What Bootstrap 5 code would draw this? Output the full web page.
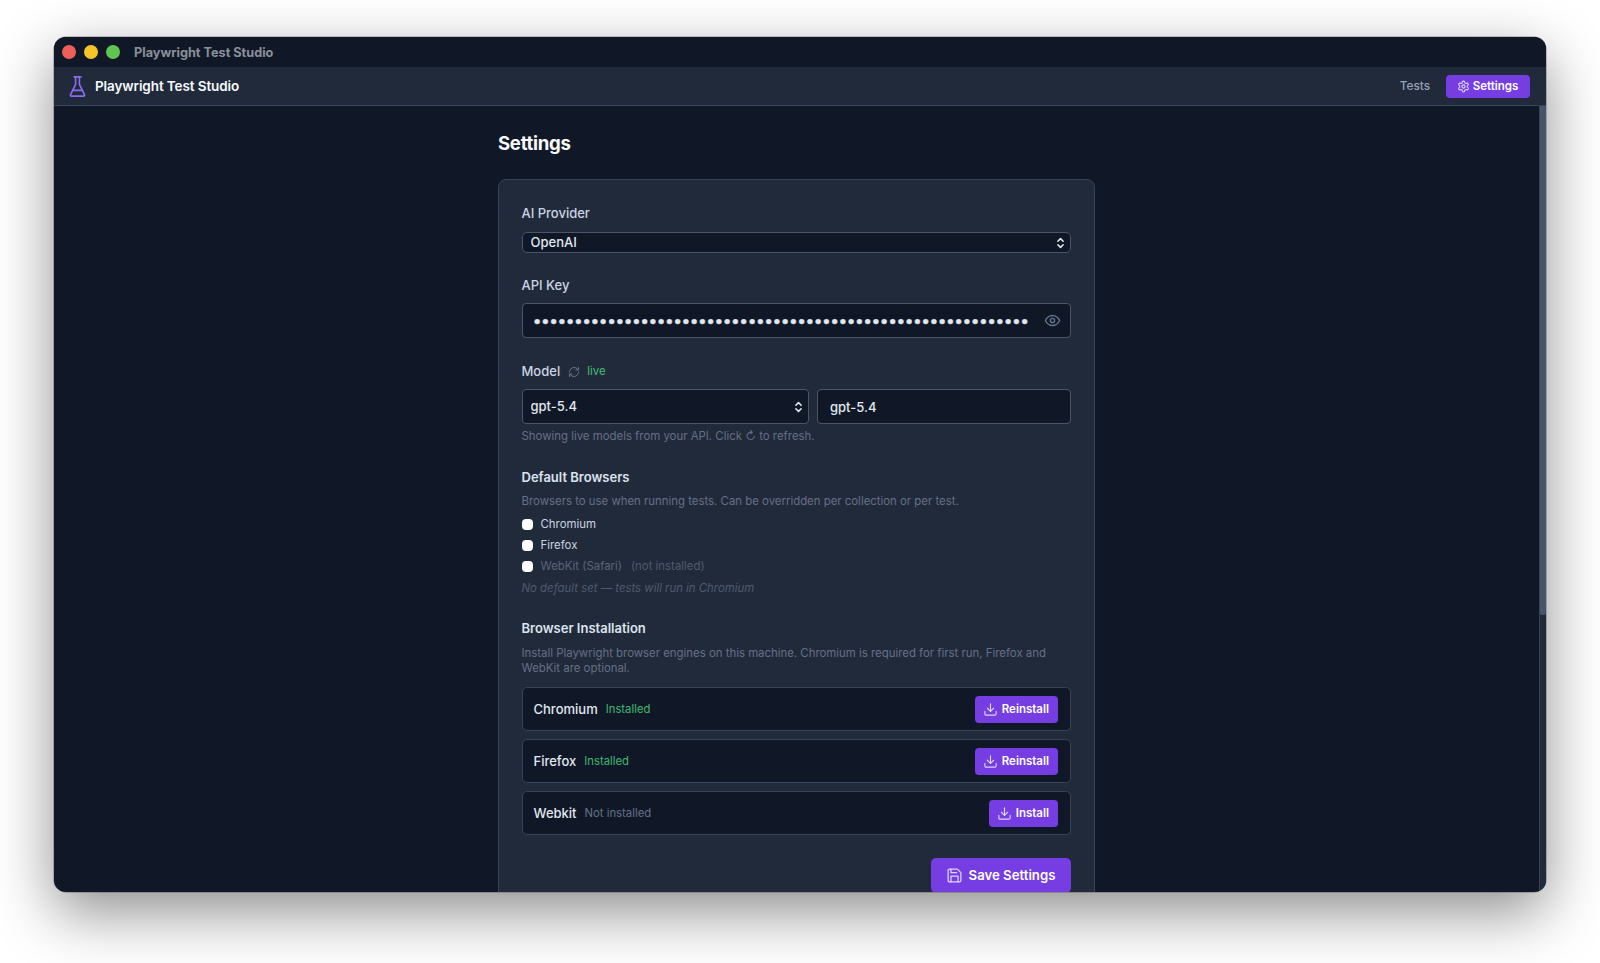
<!DOCTYPE html>
<html lang="en">
<head>
<meta charset="utf-8">
<title>Playwright Test Studio</title>
<link href="https://cdn.jsdelivr.net/npm/bootstrap@5.3.0/dist/css/bootstrap.min.css" rel="stylesheet">
<style>
html,body{height:963px;overflow:hidden;background:#fff}
body{font-family:Inter,"Liberation Sans",sans-serif;color:#e2e8f0}
.ic{fill:none;stroke:currentColor;stroke-width:2;stroke-linecap:round;stroke-linejoin:round;flex:none;display:block}
.appwin{margin:37px 0 0 54px;width:1492px;height:855px;border-radius:12px;overflow:hidden;background:#101828;box-shadow:0 20px 60px rgba(0,0,0,.45),0 0 0 .5px rgba(0,0,0,.4);display:flex;flex-direction:column}
.titlebar{height:30px;background:#101828;padding-left:8px;gap:8px;flex:none}
.dot-light{width:14px;height:14px;border-radius:50%}
.titlebar-text{font-size:12.7px;font-weight:700;color:#8a8f98;margin-left:6px;line-height:30px;padding-top:1px}
.appbar{height:39px;background:#212a3b;border-bottom:1px solid #374357;padding:0 16px 0 11.5px;flex:none}
.brand-gap{gap:6.5px}
.brand-icon{color:#8b6cf0;stroke-width:1.7}
.brand-text{font-size:13.5px;font-weight:600;color:#f8fafc;letter-spacing:-.1px}
.tab-plain{font-size:11.8px;font-weight:500;color:#94a3b8;margin-right:16px;padding-top:2px}
.tab-active{height:23px;width:84px;background:#753de2;color:#fff;border-radius:4px;font-size:11.5px;font-weight:600;gap:3px;border:0;padding:1px 1px 0 0}
.tab-active .ic{color:#ddd6fe;margin-top:-1px}
.bodyrow{flex:1;min-height:0}
.mainpane{flex:1;min-width:0;overflow:hidden;padding-top:24px}
.colwrap{width:597px;margin:0 auto}
.pagehead{font-size:18.6px;font-weight:700;line-height:26px;color:#f8fafc;margin:0 0 23px;letter-spacing:-.3px}
.panel{background:#212a3b;border:1px solid #374357;border-radius:8px;padding:25px 23px 40px 22.5px}
.fld-label{display:block;font-size:13px;font-weight:500;line-height:17px;color:#cbd5e1;margin:0}
.fld-strong{font-weight:600;color:#dbe3ee}
.dark-input{background-color:#101828;border:1px solid #4a5568;color:#e2e8f0;font-size:13px;font-weight:500;border-radius:4px;box-shadow:none}
.dark-input:focus{background-color:#101828;color:#e2e8f0;border-color:#4a5568;box-shadow:none}
.sel-arrow{background-image:url("data:image/svg+xml,%3Csvg xmlns='http://www.w3.org/2000/svg' viewBox='0 0 10 16'%3E%3Cpath d='M2 6l3-3 3 3M2 10l3 3 3-3' fill='none' stroke='%23e2e8f0' stroke-width='1.8' stroke-linecap='round' stroke-linejoin='round'/%3E%3C/svg%3E");background-size:9px 14px;background-position:right 5.5px center}
.sel-thin{height:21px;min-height:21px;padding:0 24px 0 8px;line-height:19px;border-radius:5px}
.sel-tall{height:35px;padding:1px 24px 0 8px}
.txt-tall{height:35px;padding:0 12px}
.model-sel{flex:0 0 287.5px;width:287.5px}
.model-txt{flex:1;min-width:0}
.pw-input{height:35px;padding:0 36px 0 10.5px;font-size:15.5px;color:#e2e8f0;-webkit-text-stroke:.5px #e2e8f0}
.eye-btn{position:absolute;right:10.5px;top:9px;color:#64748b}
.gap10{margin-top:10px}.gap9{margin-top:9px}.gap24{margin-top:24px}.gap25{margin-top:25px}
.live-tag{font-size:11.5px;line-height:17px;font-weight:400;color:#4ade80;opacity:.8}
.refresh-ic{color:#64748b;margin-left:8px;margin-right:7px}
.hint{font-size:11.4px;line-height:15.6px;color:#667085;margin:0}
.hint-a{margin-top:5px}.hint-b{margin-top:8px}.hint-c{margin-top:9px}
.cb-list{margin-top:5px}
.cb-row{height:21px;gap:8px;font-size:11.4px;color:#cbd5e1;margin:0}
input.cb-box[type=checkbox]{width:11px;height:11px;margin:0;border-radius:4px;background-color:#fff;border:0;flex:none}
.cb-muted{color:#5b6679}
.cb-note{margin-left:1px;color:#4f5a6d}
.nodefault{font-size:11.4px;font-style:italic;color:#4f5a6d;line-height:16px;margin:2.5px 0 0}
.br-stack{margin-top:10px;gap:8px}
.br-row{height:44px;background:#101828;border:1px solid #374357;border-radius:5px;padding:1px 12px 0 11px}
.br-name{font-size:13px;font-weight:500;color:#e2e8f0;margin-right:8px}
.st-ok{font-size:11.3px;color:#4ade80;opacity:.8}
.st-no{font-size:11.3px;color:#667085}
.act-btn{height:27px;background:#753de2;border:0;border-radius:4px;color:#fff;font-size:11.5px;font-weight:600;padding:0 9px 0 8px;gap:4px}
.act-btn:hover,.save-btn:hover{background:#753de2;color:#fff}
.act-btn .ic,.save-btn .ic{color:#ddd6fe;stroke-width:1.8}
.save-row{margin-top:23px}
.save-btn{height:35px;width:140px;background:#753de2;border:0;border-radius:5px;color:#fff;font-size:13.2px;font-weight:600;gap:6px;padding:1px 1px 0 0}
.scroll-track{width:7px;background:#212a3b;flex:none;border-left:1px solid #374357}
.scroll-thumb{height:509px;background:#475569;border-radius:0 0 2px 2px}
</style>
</head>
<body>
<div class="appwin">
  <div class="titlebar d-flex align-items-center">
    <span class="dot-light" style="background:#ef5f57"></span>
    <span class="dot-light" style="background:#f5c527"></span>
    <span class="dot-light" style="background:#5fc550"></span>
    <span class="titlebar-text">Playwright Test Studio</span>
  </div>
  <nav class="appbar d-flex align-items-center justify-content-between">
    <div class="d-flex align-items-center brand-gap">
      <svg class="ic brand-icon" width="23" height="23" viewBox="0 0 24 24"><path d="M10 2v7.527a2 2 0 0 1-.211.896L4.72 20.55a1 1 0 0 0 .9 1.45h12.76a1 1 0 0 0 .9-1.45l-5.069-10.127A2 2 0 0 1 14 9.527V2"/><path d="M8.5 2h7"/><path d="M7 16h10"/></svg>
      <span class="brand-text">Playwright Test Studio</span>
    </div>
    <div class="d-flex align-items-center">
      <span class="tab-plain">Tests</span>
      <button class="tab-active btn d-flex align-items-center justify-content-center">
        <svg class="ic" width="13" height="13" viewBox="0 0 24 24"><path d="M12.22 2h-.44a2 2 0 0 0-2 2v.18a2 2 0 0 1-1 1.73l-.43.25a2 2 0 0 1-2 0l-.15-.08a2 2 0 0 0-2.73.73l-.22.38a2 2 0 0 0 .73 2.73l.15.1a2 2 0 0 1 1 1.72v.51a2 2 0 0 1-1 1.74l-.15.09a2 2 0 0 0-.73 2.73l.22.38a2 2 0 0 0 2.73.73l.15-.08a2 2 0 0 1 2 0l.43.25a2 2 0 0 1 1 1.73V20a2 2 0 0 0 2 2h.44a2 2 0 0 0 2-2v-.18a2 2 0 0 1 1-1.73l.43-.25a2 2 0 0 1 2 0l.15.08a2 2 0 0 0 2.73-.73l.22-.39a2 2 0 0 0-.73-2.73l-.15-.08a2 2 0 0 1-1-1.74v-.5a2 2 0 0 1 1-1.74l.15-.09a2 2 0 0 0 .73-2.73l-.22-.38a2 2 0 0 0-2.73-.73l-.15.08a2 2 0 0 1-2 0l-.43-.25a2 2 0 0 1-1-1.73V4a2 2 0 0 0-2-2z"/><circle cx="12" cy="12" r="3"/></svg>
        Settings
      </button>
    </div>
  </nav>
  <div class="bodyrow d-flex">
    <main class="mainpane">
      <div class="colwrap">
        <h1 class="pagehead">Settings</h1>
        <div class="panel">
          <label class="fld-label">AI Provider</label>
          <select class="form-select dark-input sel-arrow sel-thin gap10"><option>OpenAI</option></select>

          <label class="fld-label gap24">API Key</label>
          <div class="position-relative gap9">
            <input type="password" class="form-control dark-input pw-input" value="xxxxxxxxxxxxxxxxxxxxxxxxxxxxxxxxxxxxxxxxxxxxxxxxxxxxxxxxxxxx">
            <svg class="ic eye-btn" width="17" height="17" viewBox="0 0 24 24"><path d="M2 12s3-7 10-7 10 7 10 7-3 7-10 7-10-7-10-7Z"/><circle cx="12" cy="12" r="3"/></svg>
          </div>

          <div class="d-flex align-items-center gap25">
            <label class="fld-label">Model</label>
            <svg class="ic refresh-ic" width="12" height="12" viewBox="0 0 24 24"><path d="M3 12a9 9 0 0 1 9-9 9.75 9.75 0 0 1 6.74 2.74L21 8"/><path d="M21 3v5h-5"/><path d="M21 12a9 9 0 0 1-9 9 9.75 9.75 0 0 1-6.74-2.74L3 16"/><path d="M8 16H3v5"/></svg>
            <span class="live-tag">live</span>
          </div>
          <div class="d-flex gap-2 gap9">
            <select class="form-select dark-input sel-arrow sel-tall model-sel"><option>gpt-5.4</option></select>
            <input class="form-control dark-input txt-tall model-txt" value="gpt-5.4">
          </div>
          <p class="hint hint-a">Showing live models from your API. Click ↻ to refresh.</p>

          <div class="fld-label fld-strong gap24">Default Browsers</div>
          <p class="hint hint-b">Browsers to use when running tests. Can be overridden per collection or per test.</p>
          <div class="cb-list">
            <label class="cb-row d-flex align-items-center"><input type="checkbox" class="form-check-input cb-box">Chromium</label>
            <label class="cb-row d-flex align-items-center"><input type="checkbox" class="form-check-input cb-box">Firefox</label>
            <label class="cb-row d-flex align-items-center cb-muted"><input type="checkbox" class="form-check-input cb-box">WebKit (Safari) <span class="cb-note">(not installed)</span></label>
          </div>
          <p class="nodefault">No default set — tests will run in Chromium</p>

          <div class="fld-label fld-strong gap24">Browser Installation</div>
          <p class="hint hint-c">Install Playwright browser engines on this machine. Chromium is required for first run, Firefox and WebKit are optional.</p>
          <div class="br-stack d-flex flex-column">
            <div class="br-row d-flex align-items-center">
              <span class="br-name">Chromium</span><span class="st-ok">Installed</span>
              <button class="act-btn btn d-flex align-items-center ms-auto"><svg class="ic" width="15" height="15" viewBox="0 0 24 24"><path d="M21 15v4a2 2 0 0 1-2 2H5a2 2 0 0 1-2-2v-4"/><path d="m7 10 5 5 5-5"/><path d="M12 15V3"/></svg>Reinstall</button>
            </div>
            <div class="br-row d-flex align-items-center">
              <span class="br-name">Firefox</span><span class="st-ok">Installed</span>
              <button class="act-btn btn d-flex align-items-center ms-auto"><svg class="ic" width="15" height="15" viewBox="0 0 24 24"><path d="M21 15v4a2 2 0 0 1-2 2H5a2 2 0 0 1-2-2v-4"/><path d="m7 10 5 5 5-5"/><path d="M12 15V3"/></svg>Reinstall</button>
            </div>
            <div class="br-row d-flex align-items-center">
              <span class="br-name">Webkit</span><span class="st-no">Not installed</span>
              <button class="act-btn btn d-flex align-items-center ms-auto"><svg class="ic" width="15" height="15" viewBox="0 0 24 24"><path d="M21 15v4a2 2 0 0 1-2 2H5a2 2 0 0 1-2-2v-4"/><path d="m7 10 5 5 5-5"/><path d="M12 15V3"/></svg>Install</button>
            </div>
          </div>
          <div class="save-row d-flex justify-content-end">
            <button class="save-btn btn d-flex align-items-center justify-content-center"><svg class="ic" width="17" height="17" viewBox="0 0 24 24"><path d="M19 21H5a2 2 0 0 1-2-2V5a2 2 0 0 1 2-2h11l5 5v11a2 2 0 0 1-2 2z"/><path d="M17 21v-8H7v8"/><path d="M7 3v5h8"/></svg>Save Settings</button>
          </div>
        </div>
      </div>
    </main>
    <div class="scroll-track"><div class="scroll-thumb"></div></div>
  </div>
</div>
</body>
</html>
